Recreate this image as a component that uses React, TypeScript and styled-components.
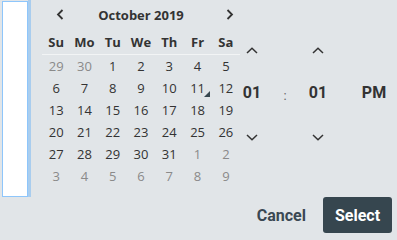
import React from "react";
import styled, { createGlobalStyle } from "styled-components";

const GlobalStyle = createGlobalStyle`
  html, body {
    margin: 0;
    padding: 0;
    background: #e1e5e8;
  }
`;

const WEEKDAYS = ["Su", "Mo", "Tu", "We", "Th", "Fr", "Sa"];

type Day = { n: number; muted?: boolean; marked?: boolean };

const WEEKS: Day[][] = [
  [{ n: 29, muted: true }, { n: 30, muted: true }, { n: 1 }, { n: 2 }, { n: 3 }, { n: 4 }, { n: 5 }],
  [{ n: 6 }, { n: 7 }, { n: 8 }, { n: 9 }, { n: 10 }, { n: 11, marked: true }, { n: 12 }],
  [{ n: 13 }, { n: 14 }, { n: 15 }, { n: 16 }, { n: 17 }, { n: 18 }, { n: 19 }],
  [{ n: 20 }, { n: 21 }, { n: 22 }, { n: 23 }, { n: 24 }, { n: 25 }, { n: 26 }],
  [{ n: 27 }, { n: 28 }, { n: 29 }, { n: 30 }, { n: 31 }, { n: 1, muted: true }, { n: 2, muted: true }],
  [3, 4, 5, 6, 7, 8, 9].map((n) => ({ n, muted: true })),
];

function Chevron({ dir }: { dir: "left" | "right" | "up" | "down" }) {
  if (dir === "left" || dir === "right") {
    return (
      <svg width="8" height="11" viewBox="0 0 8 11">
        <path
          d={dir === "left" ? "M6.5 1 L2 5.5 L6.5 10" : "M1.5 1 L6 5.5 L1.5 10"}
          fill="none"
          stroke="#333"
          strokeWidth="1.8"
        />
      </svg>
    );
  }
  return (
    <svg width="12" height="7" viewBox="0 0 12 7">
      <path
        d={dir === "up" ? "M1 6 L6 1.2 L11 6" : "M1 1 L6 5.8 L11 1"}
        fill="none"
        stroke="#333"
        strokeWidth="1.5"
      />
    </svg>
  );
}

export default function App() {
  return (
    <>
      <GlobalStyle />
      <Picker>
        <Body>
          <InputRail>
            <InputBox />
            <FocusBar />
          </InputRail>
          <Calendar>
            <NavRow>
              <NavButton $shift={4}><Chevron dir="left" /></NavButton>
              <MonthTitle>October 2019</MonthTitle>
              <NavButton $shift={4}><Chevron dir="right" /></NavButton>
            </NavRow>
            <WeekdayRow>
              {WEEKDAYS.map((d) => (
                <Weekday key={d}>{d}</Weekday>
              ))}
            </WeekdayRow>
            {WEEKS.map((week, i) => (
              <DayRow key={i}>
                {week.map((day, j) => (
                  <DayCell key={j} $muted={day.muted}>
                    {day.n}
                    {day.marked && <Marker />}
                  </DayCell>
                ))}
              </DayRow>
            ))}
          </Calendar>
          <TimePicker>
            <Spinner>
              <Chevron dir="up" />
              <TimeValue>01</TimeValue>
              <Chevron dir="down" />
            </Spinner>
            <Colon>:</Colon>
            <Spinner>
              <Chevron dir="up" />
              <TimeValue>01</TimeValue>
              <Chevron dir="down" />
            </Spinner>
            <Meridiem>PM</Meridiem>
          </TimePicker>
        </Body>
        <Footer>
          <CancelButton>Cancel</CancelButton>
          <SelectButton>Select</SelectButton>
        </Footer>
      </Picker>
    </>
  );
}

const Picker = styled.div`
  display: flex;
  flex-direction: column;
  width: 397px;
  height: 236px;
  background: #e1e5e8;
  overflow: hidden;
`;

const Body = styled.div`
  display: flex;
  height: 197px;
`;

const InputRail = styled.div`
  display: flex;
  padding-left: 2px;
  height: 197px;
`;

const InputBox = styled.div`
  box-sizing: border-box;
  width: 26px;
  height: 196px;
  margin-top: 1px;
  background: #fff;
  border: 1px solid #8ec6fb;
`;

const FocusBar = styled.div`
  width: 3px;
  height: 197px;
  background: #a9cdee;
`;

const Calendar = styled.div`
  width: 198px;
  margin-left: 11px;
  font-family: "Open Sans", "Liberation Sans", sans-serif;
  color: #333;
`;

const SevenCols = styled.div`
  display: grid;
  grid-template-columns: repeat(7, 1fr);
  align-items: center;
`;

const NavRow = styled(SevenCols)`
  height: 30px;
`;

const NavButton = styled.div<{ $shift: number }>`
  display: flex;
  justify-content: center;
  padding-left: ${(p) => p.$shift * 2}px;
  height: 12px;
`;

const MonthTitle = styled.div`
  grid-column: span 5;
  text-align: center;
  font-size: 13px;
  font-weight: 700;
`;

const WeekdayRow = styled(SevenCols)`
  height: 24px;
  border-bottom: 1px solid #f2f4f5;
`;

const Weekday = styled.div`
  text-align: center;
  font-size: 13px;
  font-weight: 700;
`;

const DayRow = styled(SevenCols)`
  height: 22px;
`;

const DayCell = styled.div<{ $muted?: boolean }>`
  position: relative;
  text-align: center;
  font-size: 13px;
  line-height: 22px;
  color: ${(p) => (p.$muted ? "#8a8a8a" : "#333")};
`;

const Marker = styled.span`
  position: absolute;
  left: 21px;
  bottom: 2px;
  width: 0;
  height: 0;
  border-left: 6px solid transparent;
  border-bottom: 6px solid #37474f;
`;

const TimePicker = styled.div`
  display: flex;
  font-family: Roboto, "Liberation Sans", sans-serif;
  color: #333;
`;

const Spinner = styled.div`
  display: flex;
  flex-direction: column;
  align-items: center;
  width: 24px;
  padding-top: 47px;
  & > svg:last-child {
    margin-top: 31px;
  }
`;

const TimeValue = styled.div`
  margin-top: 29px;
  font-size: 16px;
  font-weight: 700;
  line-height: 20px;
`;

const Colon = styled.div`
  width: 42px;
  padding-top: 86px;
  text-align: center;
  font-size: 13px;
  color: #666;
  line-height: 20px;
`;

const Meridiem = styled.div`
  width: 46px;
  margin-left: 21px;
  padding-top: 83px;
  text-align: center;
  font-size: 16px;
  font-weight: 700;
  line-height: 20px;
`;

const Footer = styled.div`
  display: flex;
  justify-content: flex-end;
  align-items: center;
  padding-right: 5px;
  height: 36px;
`;

const BaseButton = styled.button`
  height: 36px;
  border: none;
  border-radius: 3px;
  font-family: Roboto, "Liberation Sans", sans-serif;
  font-size: 16px;
  font-weight: 700;
  cursor: pointer;
`;

const CancelButton = styled(BaseButton)`
  padding: 0 17px;
  background: transparent;
  color: #3a4853;
`;

const SelectButton = styled(BaseButton)`
  width: 69px;
  padding: 0;
  background: #36464f;
  color: #fff;
`;
